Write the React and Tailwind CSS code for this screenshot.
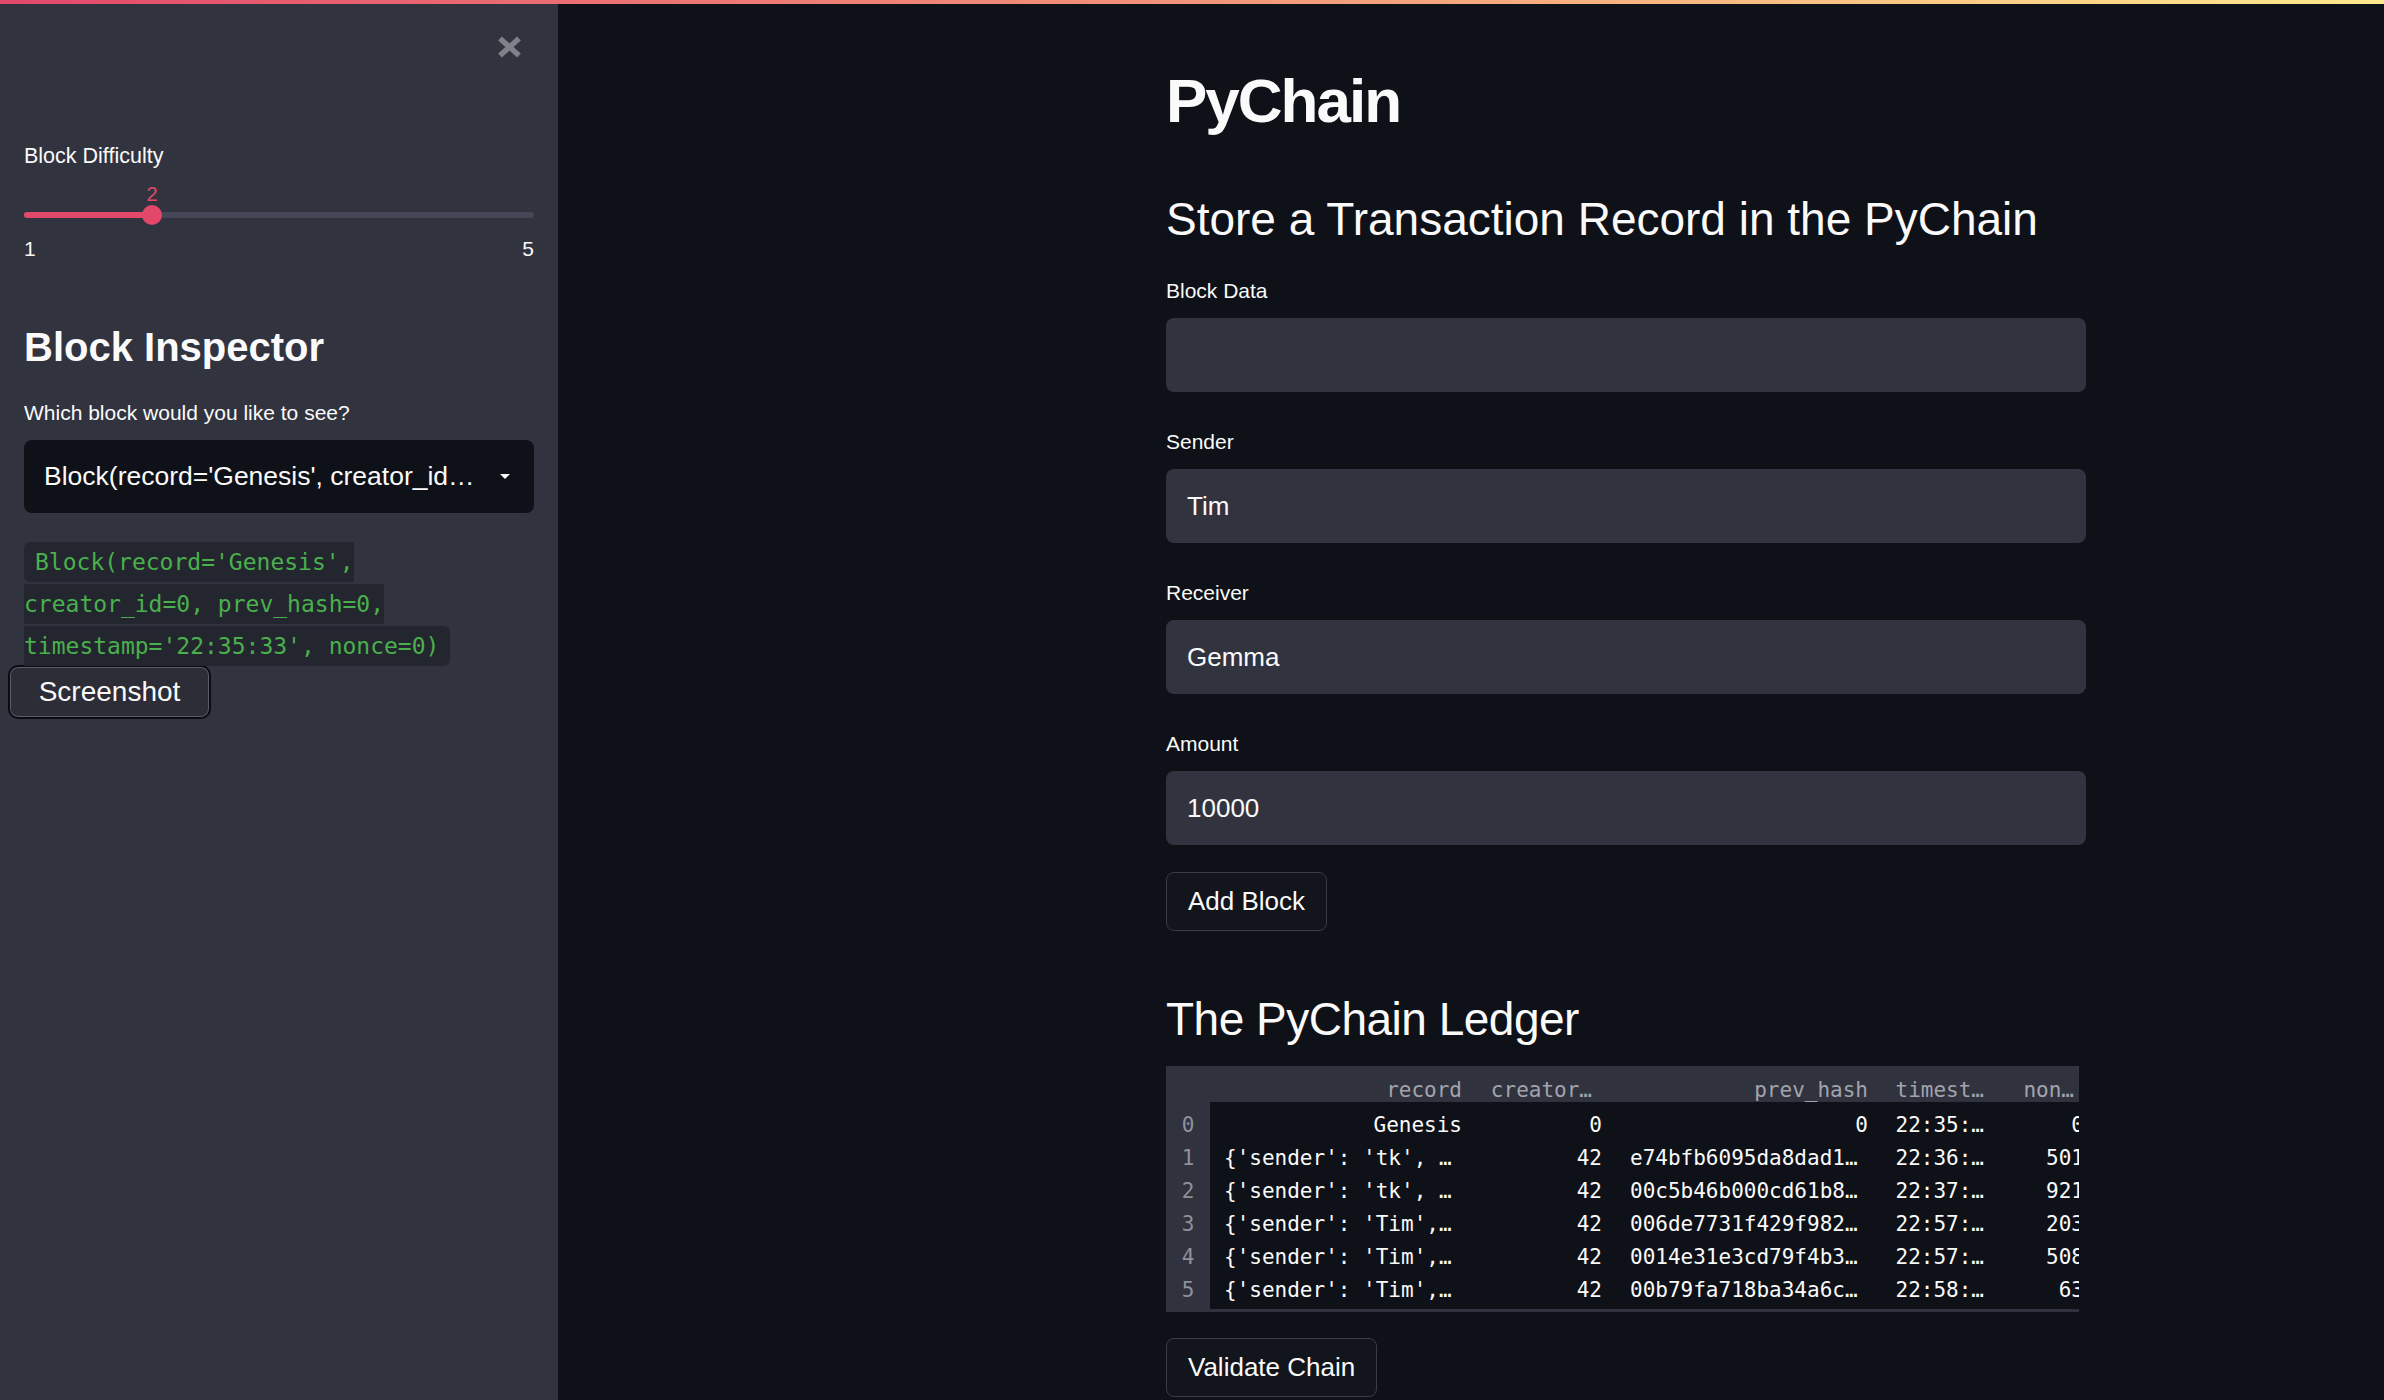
import React from "react";

const ledger = [
  { idx: "0", record: "Genesis", recordLeft: false, creator: "0", hash: "0", hashLeft: false, time: "22:35:…", nonce: "0" },
  { idx: "1", record: "{'sender': 'tk', …", recordLeft: true, creator: "42", hash: "e74bfb6095da8dad1…", hashLeft: true, time: "22:36:…", nonce: "501" },
  { idx: "2", record: "{'sender': 'tk', …", recordLeft: true, creator: "42", hash: "00c5b46b000cd61b8…", hashLeft: true, time: "22:37:…", nonce: "921" },
  { idx: "3", record: "{'sender': 'Tim',…", recordLeft: true, creator: "42", hash: "006de7731f429f982…", hashLeft: true, time: "22:57:…", nonce: "203" },
  { idx: "4", record: "{'sender': 'Tim',…", recordLeft: true, creator: "42", hash: "0014e31e3cd79f4b3…", hashLeft: true, time: "22:57:…", nonce: "508" },
  { idx: "5", record: "{'sender': 'Tim',…", recordLeft: true, creator: "42", hash: "00b79fa718ba34a6c…", hashLeft: true, time: "22:58:…", nonce: "63" },
];

const Field = ({ label, value, className }) => {
  return (
    <div className={className}>
      <div className="text-[21px] leading-[32px]">{label}</div>
      <div className="mt-[11px] flex h-[74px] items-center rounded-[8px] bg-[#31333f] px-[21px] text-[26px]">
        {value}
      </div>
    </div>
  );
};

const Button = ({ children, className }) => {
  return (
    <button
      className={`flex h-[59px] items-center rounded-[8px] border border-[#393b45] bg-[#12151c] px-[21px] text-[26px] text-[#fafafa] ${className}`}
    >
      {children}
    </button>
  );
};

const Ledger = () => {
  return (
    <div className="mt-[19px] w-[913px] overflow-hidden bg-[#30323e] pb-[3px] font-['DejaVu_Sans_Mono','Liberation_Mono',monospace] text-[21px] leading-[24px]">
      {/* header */}
      <div className="grid h-[36px] w-[926px] grid-cols-[44px_262px_140px_266px_116px_98px] items-end text-[#a2a4ad]">
        <div></div>
        <div className="pr-[10px] text-right">record</div>
        <div className="pr-[20px] text-right">creator…</div>
        <div className="pr-[10px] text-right">prev_hash</div>
        <div className="pr-[10px] text-right">timest…</div>
        <div className="pr-[18px] text-right">non…</div>
      </div>
      {/* body */}
      <div className="flex w-[926px]">
        <div className="w-[44px] shrink-0 pt-[6px] text-[#8f919a]">
          {ledger.map((r) => (
            <div key={r.idx} className="flex h-[33px] items-center justify-center">
              {r.idx}
            </div>
          ))}
        </div>
        <div className="flex-1 bg-[#0e1117] pb-[3px] pt-[6px] text-[#fafafa]">
          {ledger.map((r) => (
            <div
              key={r.idx}
              className="grid h-[33px] grid-cols-[262px_140px_266px_116px_98px] items-center whitespace-nowrap"
            >
              <div className={r.recordLeft ? "pl-[14px]" : "pr-[10px] text-right"}>{r.record}</div>
              <div className="pr-[10px] text-right">{r.creator}</div>
              <div className={r.hashLeft ? "pl-[18px]" : "pr-[10px] text-right"}>{r.hash}</div>
              <div className="pr-[10px] text-right">{r.time}</div>
              <div className="pr-[8px] text-right">{r.nonce}</div>
            </div>
          ))}
        </div>
      </div>
    </div>
  );
};

const Sidebar = () => {
  return (
    <aside className="w-[558px] shrink-0 bg-[#31333f] px-[24px]">
      <div className="mt-[32px] flex justify-end pr-[12px]">
        <svg width="25" height="22" viewBox="0 0 25 22" aria-hidden="true">
          <path d="M3 2.5 L22 19.5 M22 2.5 L3 19.5" stroke="#7f8189" strokeWidth="5.5" />
        </svg>
      </div>

      <div className="mt-[82px] text-[21.5px] leading-[32px]">Block Difficulty</div>
      <div className="relative h-[65px]">
        <div className="absolute left-[128px] top-[12px] -translate-x-1/2 text-[20px] leading-[20px] text-[#e3486a]">
          2
        </div>
        <div className="absolute left-0 right-0 top-[40px] h-[6px] rounded-full bg-[#454756]"></div>
        <div className="absolute left-0 top-[40px] h-[6px] w-[128px] rounded-full bg-[#e3486a]"></div>
        <div className="absolute left-[118px] top-[33px] h-[20px] w-[20px] rounded-full bg-[#e3486a]"></div>
      </div>
      <div className="flex justify-between text-[21px] leading-[24px]">
        <span>1</span>
        <span>5</span>
      </div>

      <h2 className="mt-[62px] text-[40px] font-bold leading-[48px]">Block Inspector</h2>
      <div className="mt-[26px] text-[21px] leading-[32px]">Which block would you like to see?</div>
      <div className="mt-[11px] flex h-[73px] items-center justify-between rounded-[8px] bg-[#0e1117] pl-[20px] pr-[24px]">
        <span className="whitespace-nowrap text-[26.5px]">Block(record='Genesis', creator_id…</span>
        <svg width="10" height="5" viewBox="0 0 10 5" aria-hidden="true">
          <path d="M0 0 L10 0 L5 5 Z" fill="#fafafa" />
        </svg>
      </div>

      <p className="mt-[28px] font-['DejaVu_Sans_Mono','Liberation_Mono',monospace] text-[23px] leading-[42px]">
        <span className="rounded-[6px] bg-[#24262f] px-[11px] py-[6.6px] text-[#49b04c]">
          Block(record='Genesis', creator_id=0, prev_hash=0, timestamp='22:35:33', nonce=0)
        </span>
      </p>
      <button className="-ml-[16px] -mt-[2px] flex h-[54px] w-[203px] items-center justify-center rounded-[10px] border-2 border-[#0b0b10] bg-[#2c2d37] text-[28px] text-[#fafafa] shadow-[inset_0_0_0_1px_#5a5c66]">
        Screenshot
      </button>
    </aside>
  );
};

const App = () => {
  return (
    <div className="flex h-[1400px] w-full flex-col overflow-hidden bg-[#0e1117] font-['Liberation_Sans',Arial,sans-serif] text-[#fafafa]">
      <div className="h-[4px] shrink-0 bg-linear-to-r from-[#e3476b] via-[#f19479] to-[#fde98c]"></div>
      <div className="flex flex-1">
        <Sidebar />
        <main className="flex-1 pl-[608px]">
          <div className="w-[920px]">
            <h1 className="mt-[61px] text-[62px] font-bold leading-[72px] tracking-[-2px]">PyChain</h1>
            <h2 className="mt-[54px] text-[46px] leading-[56px]">Store a Transaction Record in the PyChain</h2>

            <Field className="mt-[28px]" label="Block Data" value="" />
            <Field className="mt-[34px]" label="Sender" value="Tim" />
            <Field className="mt-[34px]" label="Receiver" value="Gemma" />
            <Field className="mt-[34px]" label="Amount" value="10000" />

            <Button className="mt-[27px]">Add Block</Button>

            <h2 className="mt-[60px] text-[46px] leading-[56px] tracking-[-0.5px]">The PyChain Ledger</h2>
            <Ledger />

            <Button className="mt-[26px]">Validate Chain</Button>
          </div>
        </main>
      </div>
    </div>
  );
};

export default App;
